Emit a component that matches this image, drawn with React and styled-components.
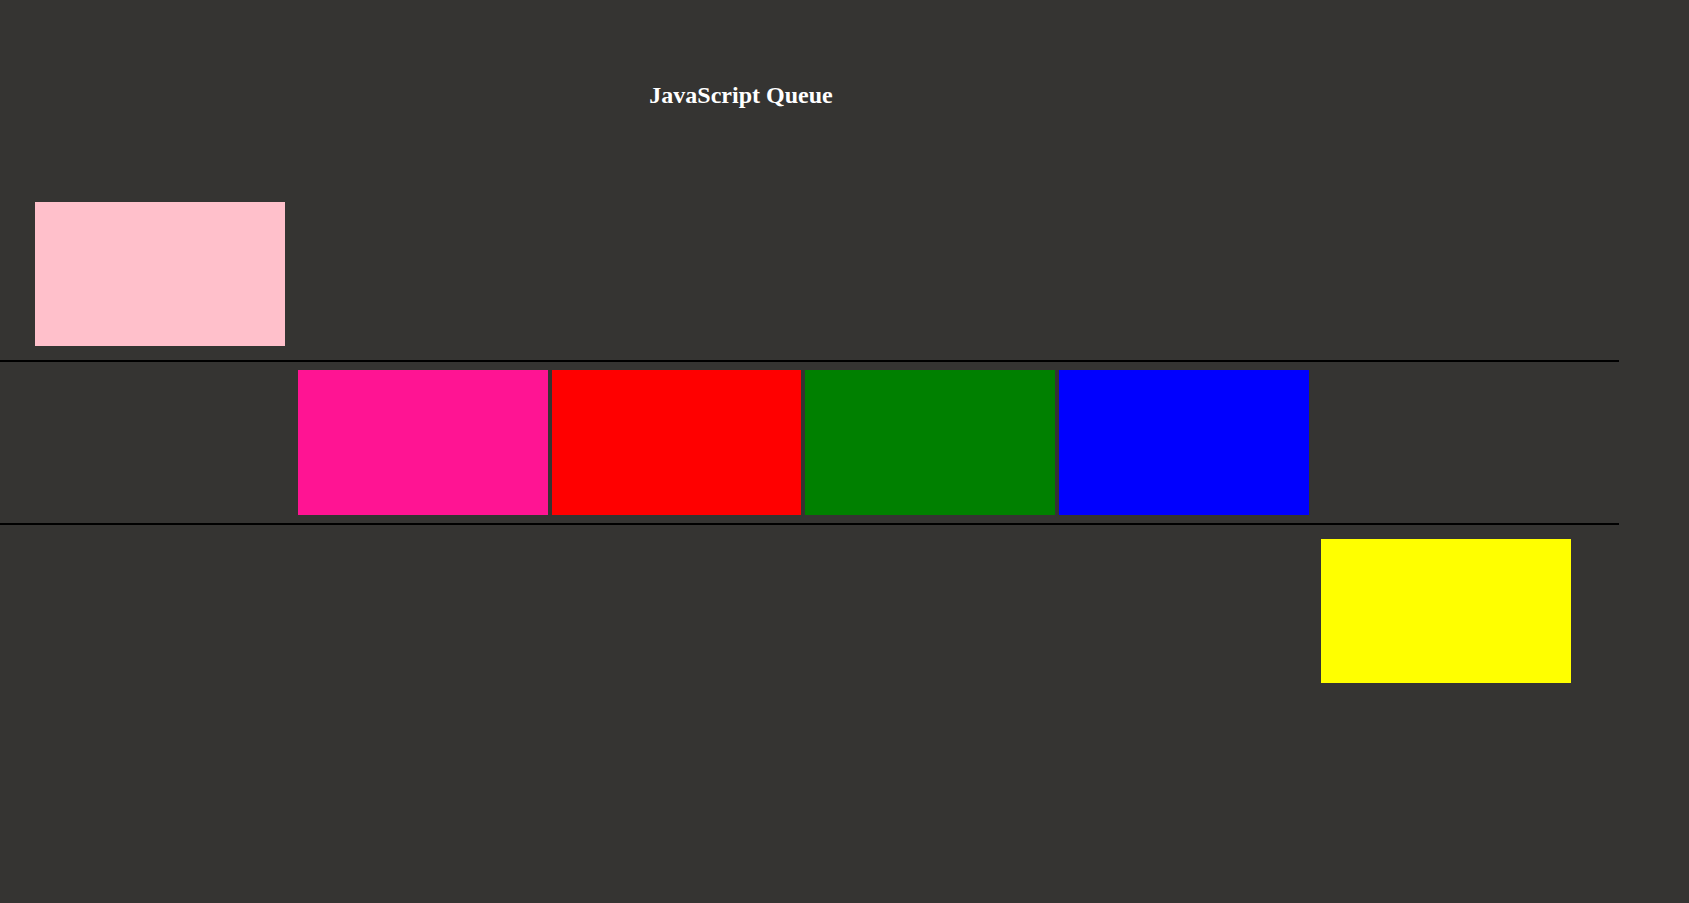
import React from "react";
import styled, { createGlobalStyle } from "styled-components";

const Global = createGlobalStyle`
  html, body {
    margin: 0;
    padding: 0;
    background: #353432;
    font-family: "Liberation Serif", "Times New Roman", serif;
  }
`;

const Page = styled.main`
  width: 1619px;
  min-height: 903px;
  box-sizing: border-box;
  padding-top: 81px;
`;

const Header = styled.header`
  width: 1482px;
  display: flex;
  justify-content: center;
`;

const Title = styled.h2`
  margin: 0;
  font-size: 24px;
  line-height: 28px;
  font-weight: bold;
  color: #ffffff;
`;

const Lane = styled.section`
  display: flex;
  gap: 4px;
  padding-left: ${(p) => p.$indent}px;
  padding-top: ${(p) => p.$top}px;
  padding-bottom: ${(p) => p.$bottom}px;
`;

const QueueLane = styled(Lane)`
  border-top: 2px solid #000;
  border-bottom: 2px solid #000;
`;

const Box = styled.div`
  width: ${(p) => p.$w || 250}px;
  height: ${(p) => p.$h || 144}px;
  background: ${(p) => p.$color};
  flex: none;
`;

export default function App() {
  return (
    <>
      <Global />
      <Page>
        <Header>
          <Title>JavaScript Queue</Title>
        </Header>
        <Lane $indent={35} $top={93} $bottom={14}>
          <Box $color="pink" />
        </Lane>
        <QueueLane $indent={298} $top={8} $bottom={8}>
          <Box $color="deeppink" $w={249.67} $h={145} />
          <Box $color="red" $w={249.67} $h={145} />
          <Box $color="green" $w={249.67} $h={145} />
          <Box $color="blue" $w={249.67} $h={145} />
        </QueueLane>
        <Lane $indent={1321} $top={14} $bottom={0}>
          <Box $color="yellow" />
        </Lane>
      </Page>
    </>
  );
}
